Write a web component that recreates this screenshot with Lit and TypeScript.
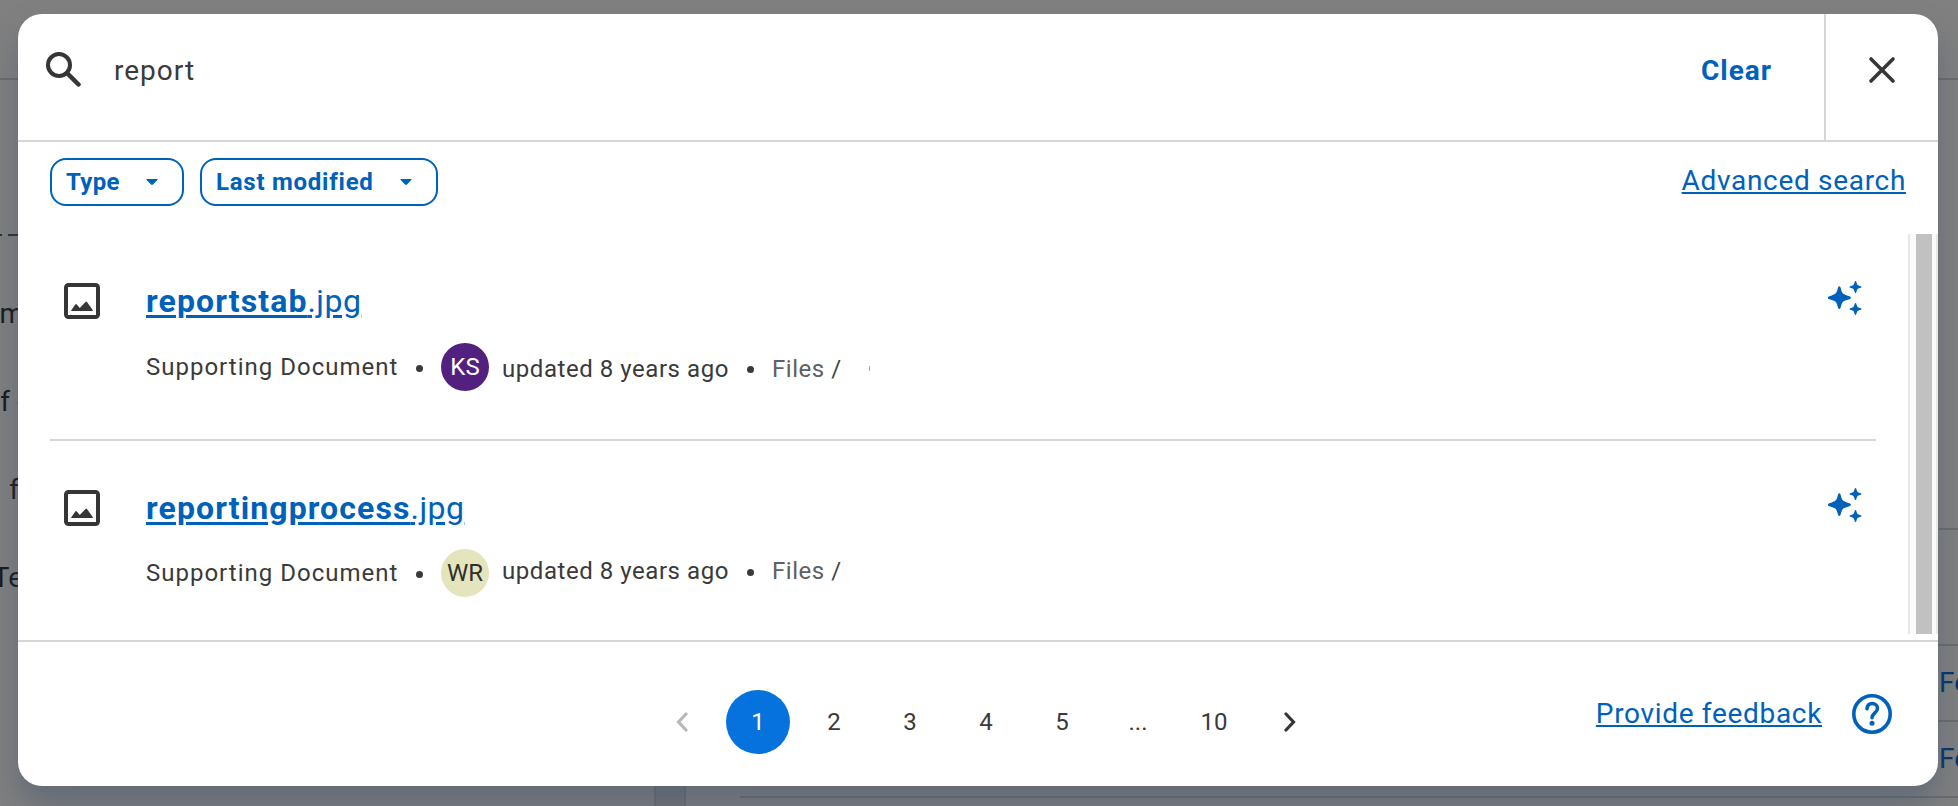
import { html, svg, LitElement, css } from 'lit';
import { customElement, property } from 'lit/decorators.js';

@customElement('search-result')
export class SearchResult extends LitElement {
    @property() name = '';
    @property() ext = '';
    @property() initials = '';

    static styles = css`
  :host {
    display: block;
  }
  .result {
    display: grid;
    grid-template-columns: 96px 1fr auto;
    height: 205px;
  }
  .icon {
    width: 36px;
    height: 36px;
    margin: 49px 0 0 14px;
  }
  .title {
    display: block;
    margin-top: 45px;
    color: #0061bb;
    font-size: 32px;
    line-height: 44px;
    text-decoration: underline;
    text-decoration-thickness: 3px;
    text-underline-offset: 3px;
  }
  .title b {
    letter-spacing: 1.1px;
  }
  .title .ext {
    letter-spacing: 0.45px;
  }
  .meta {
    display: flex;
    align-items: center;
    height: 48px;
    margin-top: 20px;
    font-size: 24px;
    line-height: 30px;
    letter-spacing: 0.55px;
    white-space: nowrap;
  }
  .meta.raised {
    margin-top: 19px;
  }
  .type {
    width: 270px;
    letter-spacing: 1px;
  }
  .dot {
    width: 7px;
    height: 7px;
    border-radius: 50%;
    background: #3a3a3a;
    margin-top: 2px;
  }
  .avatar {
    width: 48px;
    height: 48px;
    margin: 0 13px 0 18px;
    border-radius: 50%;
    line-height: 48px;
    text-align: center;
    letter-spacing: 0;
    background: #e4e4bd;
    color: #2f2f2f;
  }
  .avatar.purple {
    background: #52217f;
    color: #fff;
  }
  .where {
    display: flex;
    align-items: center;
    padding-top: 3px;
  }
  .raised .where {
    padding-top: 0;
    padding-bottom: 4px;
  }
  .updated {
    width: 245px;
  }
  .path {
    margin-left: 18px;
    color: #606060;
  }
  .slash {
    color: #454545;
  }
  .more {
    width: 1px;
    height: 5px;
    margin-left: 27px;
    background: #aaa;
  }
  .spark {
    width: 34px;
    height: 34px;
    margin: 47px 14px 0 0;
  }
  `;

    render() {
        const first = this.initials === 'KS';
        return html`
    <div class="result">
        <svg class="icon" viewBox="0 0 36 36">
            <rect x="2" y="2" width="32" height="32" rx="2.5" fill="none" stroke="#363636" stroke-width="4"/>
            <path d="M7 28q.2-.7 1-1.700L11.300 21.500q.7-.9 1.500 0L15.800 25l5.700-6q.8-.9 1.500 0l5 7q1 1.300 1 2z" fill="#363636"/>
        </svg>
        <div>
            <a class="title"><b>${this.name}</b><span class="ext">${this.ext}</span></a>
            <div class="meta ${first ? '' : 'raised'}">
                <span class="type">Supporting Document</span>
                <i class="dot"></i>
                <span class="avatar ${first ? 'purple' : ''}">${this.initials}</span>
                <div class="where">
                    <span class="updated">updated 8 years ago</span>
                    <i class="dot"></i>
                    <span class="path">Files <span class="slash">/</span></span>
                    ${first ? html`<i class="more"></i>` : ''}
                </div>
            </div>
        </div>
        <svg class="spark" viewBox="0 0 34 34" fill="#0061bb">
            <path d="M11.3 5.3c1 0 1.2 1 1.6 2.5 1.200 4.300 1.500 5.100 6 6.600 2.800.9 4 1.200 4 2.300s-1.200 1.400-4 2.300c-4.500 1.500-4.800 2.300-6 6.600-.4 1.500-.6 2.500-1.600 2.500s-1.200-1-1.600-2.500c-1.200-4.300-1.500-5.100-6-6.600-2.800-.9-4-1.200-4-2.300s1.200-1.400 4-2.300c4.500-1.500 4.800-2.300 6-6.600.4-1.500.6-2.500 1.600-2.500z"/>
            ${[6, 28].map(y => svg`<path transform="translate(27.500 ${y})" d="M0-6c.8 0 .8 1 1.500 3C2-2 2-2 3-1.500 5-.8 6-.8 6 0S5 .8 3 1.500C2 2 2 2 1.500 3 .8 5 .8 6 0 6S-.8 5-1.500 3C-2 2-2 2-3 1.500-5 .8-6 .8-6 0s1-.8 3-1.500C-2-2-2-2-1.500-3-.8-5-.8-6 0-6z"/>`)}
        </svg>
    </div>
    `;
    }
}

@customElement('app-root')
export class AppRoot extends LitElement {
    static styles = css`
  :host {
    display: block;
    position: relative;
    box-sizing: border-box;
    height: 806px;
    padding: 14px 20px 20px 18px;
    overflow: hidden;
    background: #808080;
    color: #3a3a3a;
    font-family: Roboto, 'Liberation Sans', sans-serif;
  }
  .behind {
    position: absolute;
    inset: 0;
    overflow: hidden;
    font-size: 28px;
    line-height: 32px;
    color: #171a1d;
    white-space: nowrap;
  }
  .behind > * {
    position: absolute;
  }
  .rule {
    height: 2px;
    background: #6a6c6f;
  }
  .gutter {
    top: 786px;
    left: 654px;
    width: 28px;
    height: 20px;
    border: solid #6c6e72;
    border-width: 0 2px;
    background: #747579;
  }
  .scrap {
    top: 234px;
    height: 2px;
    background: #2b2f33;
  }
  .peek {
    text-align: right;
    left: -20px;
  }
  .peek-link {
    left: 1939px;
    color: #00356a;
  }
  .dialog {
    position: relative;
    display: flex;
    flex-direction: column;
    height: 772px;
    border-radius: 24px;
    background: #fff;
    box-shadow: 0 20px 32px rgba(60, 78, 104, 0.42);
  }
  .header {
    display: flex;
    height: 126px;
    border-bottom: 2px solid #d6d6d6;
  }
  .search {
    width: 36px;
    height: 36px;
    margin: 37px 0 0 27px;
  }
  .query {
    flex: 1;
    margin: 40px 0 0 33px;
    font-size: 28px;
    line-height: 33px;
    letter-spacing: 1px;
  }
  .clear {
    margin: 40px 52px 0 0;
    color: #0061bb;
    font-size: 28px;
    font-weight: 700;
    line-height: 33px;
    letter-spacing: 1px;
  }
  .close {
    width: 112px;
    border-left: 2px solid #d6d6d6;
  }
  .close svg {
    display: block;
    width: 28px;
    height: 28px;
    margin: 42px 0 0 42px;
  }
  .filters {
    display: flex;
    gap: 16px;
    height: 92px;
    padding: 16px 32px 0;
    box-sizing: border-box;
    color: #0061bb;
  }
  .chip {
    display: flex;
    justify-content: space-between;
    align-items: center;
    box-sizing: border-box;
    width: 134px;
    height: 48px;
    padding: 0 24px 0 14px;
    border: 2px solid #0061bb;
    border-radius: 16px;
    font-size: 24px;
    font-weight: 700;
    letter-spacing: 0.3px;
    white-space: nowrap;
  }
  .chip.wide {
    width: 238px;
    letter-spacing: 0.75px;
  }
  .caret {
    width: 12px;
    height: 6px;
  }
  .link {
    color: #0061bb;
    font-size: 28px;
    line-height: 33px;
    letter-spacing: 0.68px;
    text-decoration: underline;
    text-decoration-thickness: 2px;
    text-underline-offset: 2px;
    text-decoration-skip-ink: none;
    white-space: nowrap;
  }
  .advanced {
    margin: 6px 0 0 auto;
  }
  .results {
    display: flex;
    height: 400px;
    margin-bottom: 6px;
  }
  .list {
    width: 1826px;
    margin: 0 32px;
  }
  .divider {
    height: 2px;
    background: #d6d6d6;
  }
  .scrollbar {
    box-sizing: border-box;
    width: 30px;
    padding: 0 4px 0 6px;
    border: solid #e8e8e8;
    border-width: 0 2px;
    background: #fafafa;
  }
  .thumb {
    height: 100%;
    background: #c1c1c1;
  }
  .footer {
    display: grid;
    grid-template-columns: 632px 1fr auto;
    border-top: 2px solid #d6d6d6;
  }
  .pages {
    grid-column: 2;
    display: flex;
    gap: 12px;
    margin-top: 48px;
    font-size: 24px;
    line-height: 64px;
    text-align: center;
  }
  .page {
    width: 64px;
    height: 64px;
    border-radius: 50%;
  }
  .page.current {
    background: #0572dd;
    color: #fff;
  }
  .page svg {
    display: block;
    width: 12px;
    height: 20px;
    margin: 22px auto 0;
  }
  .feedback {
    display: flex;
    gap: 30px;
    margin: 52px 46px 0 0;
  }
  .feedback .link {
    margin-top: 3px;
  }
  .help {
    width: 40px;
    height: 40px;
  }
  `;

    chip(label: string, wide = '') {
        return html`
        <div class="chip ${wide}">
            <span>${label}</span>
            <svg class="caret" viewBox="0 0 12 6"><path d="M1 0h10q1 .3.3 1L7 5.500q-1 .8-2 0L.7 1Q0 .3 1 0z" fill="#0061bb"/></svg>
        </div>`;
    }

    render() {
        return html`
    <div class="behind">
        <div class="rule" style="top:78px;left:0;width:1958px"></div>
        <div class="rule" style="top:528px;left:1900px;width:58px"></div>
        <div class="rule" style="top:644px;left:1900px;width:58px"></div>
        <div class="rule" style="top:720px;left:1900px;width:58px"></div>
        <div class="rule" style="top:796px;left:740px;width:1218px"></div>
        <div class="gutter"></div>
        <div class="scrap" style="left:0;width:2px"></div>
        <div class="scrap" style="left:8px;width:10px"></div>
        <span class="peek" style="top:298px;width:44px">m</span>
        <span class="peek" style="top:386px;width:30px">f</span>
        <span class="peek" style="top:386px;width:45px">-</span>
        <span class="peek" style="top:474px;width:39px">f</span>
        <span class="peek" style="top:562px;width:43px">Te</span>
        <span class="peek-link" style="top:667px">Fe</span>
        <span class="peek-link" style="top:743px">Fe</span>
    </div>
    <div class="dialog">
        <div class="header">
            <svg class="search" viewBox="0 0 36 36" fill="none" stroke="#363636" stroke-width="4">
                <circle cx="14" cy="14" r="11"/>
                <path d="M22 22l11.500 11.500" stroke-width="4.500" stroke-linecap="round"/>
            </svg>
            <div class="query">report</div>
            <div class="clear">Clear</div>
            <div class="close">
                <svg viewBox="0 0 28 28" stroke="#363636" stroke-width="3.600" stroke-linecap="round">
                    <path d="M3 3l22 22M25 3L3 25"/>
                </svg>
            </div>
        </div>
        <div class="filters">
            ${this.chip('Type')}
            ${this.chip('Last modified', 'wide')}
            <a class="link advanced">Advanced search</a>
        </div>
        <div class="results">
            <div class="list">
                <search-result name="reportstab" ext=".jpg" initials="KS"></search-result>
                <div class="divider"></div>
                <search-result name="reportingprocess" ext=".jpg" initials="WR"></search-result>
            </div>
            <div class="scrollbar"><div class="thumb"></div></div>
        </div>
        <div class="footer">
            <div class="pages">
                <div class="page"><svg viewBox="0 0 12 20" fill="none" stroke="#b8b8b8" stroke-width="3.200" stroke-linecap="round"><path d="M10 2L2.500 10l7.500 8"/></svg></div>
                <div class="page current">1</div>
                ${['2', '3', '4', '5', '...', '10'].map(p => html`<div class="page">${p}</div>`)}
                <div class="page"><svg viewBox="0 0 12 20" fill="none" stroke="#363636" stroke-width="3.200" stroke-linecap="round"><path d="M2 2l7.500 8L2 18"/></svg></div>
            </div>
            <div class="feedback">
                <a class="link">Provide feedback</a>
                <svg class="help" viewBox="0 0 40 40" fill="none" stroke="#0061bb">
                    <circle cx="20" cy="20" r="18.200" stroke-width="3.600"/>
                    <path d="M15 14.800c.3-3.300 2.400-5.200 5.200-5.200 3.200 0 5.300 2 5.300 4.900 0 4.300-5.500 4.500-5.500 9.300" stroke-width="3.500" stroke-linecap="round"/>
                    <circle cx="20" cy="29.300" r="2.500" fill="#0061bb" stroke="none"/>
                </svg>
            </div>
        </div>
    </div>
    `;
    }
}
